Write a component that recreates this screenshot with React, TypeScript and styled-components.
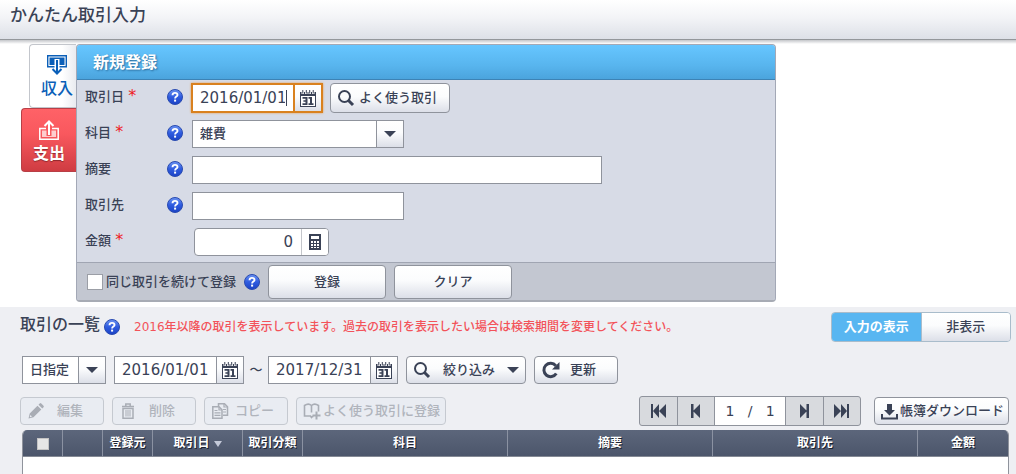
import React from "react";
import styled, { createGlobalStyle, css } from "styled-components";

const ink = "#3a4256";
const line = "#8f939c";
const face = "linear-gradient(#ffffff 0%, #fbfcfd 45%, #dcdfe8 100%)";

const GlobalStyle = createGlobalStyle`
  *, *::before, *::after { box-sizing: border-box; }
  html, body { margin: 0; padding: 0; }
  body {
    background: #eeeff3;
    color: ${ink};
    font-family: "DejaVu Sans", "Noto Sans CJK JP", sans-serif;
    font-size: 13px;
    line-height: 20px;
    font-weight: 500;
  }
  button, input, select { font: inherit; color: inherit; margin: 0; }
  svg { display: block; flex: none; }
`;

const Page = styled.div`
  display: flex;
  flex-direction: column;
  min-height: 100vh;
`;

const PageHeader = styled.header`
  height: 40px;
  padding: 3px 10px 0;
  background: linear-gradient(#ffffff, #f3f4f7 45%, #dde0e7);
  border-bottom: 1px solid #94979b;
`;

const PageTitle = styled.h1`
  margin: 0;
  font-size: 17px;
  line-height: 24px;
  font-weight: 500;
`;

const EntryArea = styled.section`
  display: flex;
  align-items: flex-start;
  padding: 4px 20px 5px 21px;
  background: linear-gradient(#c4c6ca, #ffffff 4px);
`;

const Tabs = styled.div`
  display: flex;
  flex-direction: column;
  align-items: flex-end;
  flex: none;
  width: 55px;
`;

const Tab = styled.button<{ $active?: boolean }>`
  display: flex;
  flex-direction: column;
  align-items: center;
  width: ${(p) => (p.$active ? 55 : 47)}px;
  height: 64px;
  padding: ${(p) => (p.$active ? "11px" : "10px")} 0 0;
  gap: 2px;
  border: 1px solid ${(p) => (p.$active ? "#b83f46" : "#c3c6cc")};
  border-right: 0;
  border-radius: 4px 0 0 4px;
  font-size: 16px;
  line-height: 24px;
  white-space: nowrap;
  color: ${(p) => (p.$active ? "#ffffff" : "#0b5fb8")};
  background: ${(p) =>
    p.$active
      ? "linear-gradient(#ff6267, #f9585e 40%, #cf3c42)"
      : "linear-gradient(90deg, #ffffff 70%, #e9ebf0)"};
  ${(p) =>
    p.$active &&
    css`
      font-weight: 700;
      text-shadow: 0 1px 1px #8e2a2e;
    `}
  ${(p) => !p.$active && "padding-left: 8px;"}
`;

const Panel = styled.form`
  flex: 0 1 700px;
  min-width: 0;
  border: 1px solid #a3a8b6;
  border-bottom: 2px solid #a7abb4;
  border-radius: 4px;
  background: #d7dbe6;
  overflow: hidden;
`;

const PanelTitle = styled.h2`
  margin: 0;
  height: 35px;
  padding: 6px 16px 0;
  font-size: 16px;
  line-height: 24px;
  font-weight: 700;
  color: #ffffff;
  text-shadow: 1px 1px 2px #2c6c9c;
  background: linear-gradient(#66c6ff, #58b5ee 60%, #4ba4dd);
  border-bottom: 1px solid #3d83b5;
`;

const Fields = styled.div`
  padding-bottom: 2px;
`;

const FieldRow = styled.div`
  display: flex;
  align-items: center;
  height: 36px;
  padding-left: 8px;
`;

const FieldLabel = styled.label`
  width: 82px;
  padding-bottom: 2px;
  white-space: pre;
`;

const Required = styled.span`
  color: #ee1c24;
  font-size: 16px;
  line-height: 16px;
`;

const HelpSlot = styled.span`
  display: flex;
  width: 25px;
  padding-bottom: 2px;
`;

const HelpButton = styled.button`
  display: block;
  flex: none;
  padding: 0;
  border: 0;
  background: none;
`;

const TextField = styled.input<{ $width: number }>`
  width: ${(p) => p.$width}px;
  height: 28px;
  padding: 0 8px;
  border: 1px solid ${line};
  background: #ffffff;
  outline: none;
`;

const Group = styled.div<{ $width: number; $focus?: boolean; $round?: boolean }>`
  display: flex;
  flex: none;
  width: ${(p) => p.$width}px;
  height: ${(p) => (p.$focus ? 30 : 28)}px;
  border: ${(p) => (p.$focus ? "2px solid #d9811f" : `1px solid ${line}`)};
  border-radius: ${(p) => (p.$round ? 4 : 0)}px;
  background: #ffffff;
  overflow: hidden;
  ${(p) => p.$focus && "box-shadow: 0 0 2px #e9a04f; margin: 0 7px 0 -1px;"}
  ${(p) => p.$round && "margin-left: 2px;"}
`;

const InputCell = styled.div`
  display: grid;
  flex: 1;
  min-width: 0;
  align-items: center;
  > * { grid-area: 1 / 1; }
`;

const GroupInput = styled.input<{ $right?: boolean }>`
  width: 100%;
  min-width: 0;
  height: 100%;
  padding: 0 8px 0 7px;
  border: 0;
  outline: none;
  background: none;
  font-size: 15px;
  text-align: ${(p) => (p.$right ? "right" : "left")};
`;

const Caret = styled.span`
  justify-self: end;
  width: 1px;
  height: 16px;
  margin-right: 6px;
  background: ${ink};
`;

const GroupButton = styled.button<{ $focus?: boolean; $plain?: boolean }>`
  display: flex;
  flex: none;
  align-items: center;
  justify-content: center;
  width: ${(p) => (p.$focus ? 28 : 27)}px;
  padding: 0;
  border: 0;
  border-left: ${(p) =>
    p.$focus ? "2px solid #d9811f" : `1px solid ${p.$plain ? "#c4c6cb" : line}`};
  background: ${(p) => (p.$plain ? "#ffffff" : face)};
`;

const SelectBox = styled.div<{ $width: number }>`
  display: grid;
  flex: none;
  width: ${(p) => p.$width}px;
  height: 28px;
  border: 1px solid ${line};
  background: #ffffff;
  > * { grid-area: 1 / 1; }
`;

const Select = styled.select`
  appearance: none;
  width: 100%;
  height: 26px;
  padding: 0 28px 0 7px;
  border: 0;
  outline: none;
  background: none;
`;

const SelectArrow = styled.span`
  display: flex;
  align-items: center;
  justify-content: center;
  justify-self: end;
  width: 27px;
  border-left: 1px solid ${line};
  background: ${face};
  pointer-events: none;
`;

const Button = styled.button<{ $width: number; $tall?: number; $gap?: number; $center?: boolean }>`
  display: flex;
  flex: none;
  align-items: center;
  justify-content: ${(p) => (p.$center ? "center" : "flex-start")};
  gap: ${(p) => p.$gap ?? 4}px;
  width: ${(p) => p.$width}px;
  height: ${(p) => p.$tall ?? 28}px;
  padding: 0 6px;
  border: 1px solid ${line};
  border-radius: 4px;
  background: ${face};
  white-space: nowrap;
  &:disabled {
    color: #b0b4bc;
    border-color: #c5c9d0;
    background: #e9ecf2;
  }
`;

const PanelFooter = styled.div`
  display: flex;
  align-items: center;
  gap: 8px;
  height: 38px;
  padding: 0 10px;
  background: #c3c7d1;
  border-top: 1px solid #a0a5b2;
`;

const CheckLabel = styled.label`
  display: flex;
  align-items: center;
  gap: 3px;
  white-space: nowrap;
`;

const Check = styled.input<{ $small?: boolean }>`
  appearance: none;
  display: inline-block;
  vertical-align: middle;
  width: ${(p) => (p.$small ? 12 : 16)}px;
  height: ${(p) => (p.$small ? 12 : 16)}px;
  border: 1px solid ${(p) => (p.$small ? "#c4c4c4" : "#9b9ea6")};
  background: ${(p) => (p.$small ? "#e6e6e6" : "#ffffff")};
`;

const ListArea = styled.section`
  display: flex;
  flex: 1;
  flex-direction: column;
  padding: 5px 5px 0 20px;
`;

const ListHead = styled.div`
  display: flex;
  align-items: center;
  height: 30px;
`;

const ListTitle = styled.h2`
  margin: 0 4px 4px 0;
  font-size: 16px;
  line-height: 24px;
  font-weight: 500;
  white-space: nowrap;
`;

const Notice = styled.p`
  flex: 1;
  margin: 0 0 0 14px;
  font-size: 12px;
  color: #f3535a;
  white-space: nowrap;
`;

const Toggle = styled.div`
  display: flex;
  flex: none;
  width: 180px;
  height: 30px;
  border: 1px solid #a9bccb;
  border-radius: 4px;
  overflow: hidden;
`;

const ToggleButton = styled.button<{ $active?: boolean }>`
  flex: 1;
  padding: 0;
  border: 0;
  font-weight: ${(p) => (p.$active ? 700 : 500)};
  color: ${(p) => (p.$active ? "#ffffff" : ink)};
  background: ${(p) => (p.$active ? "#58b6f1" : face)};
  border-left: ${(p) => (p.$active ? "0" : "1px solid #a9bccb")};
`;

const FilterBar = styled.div`
  display: flex;
  align-items: center;
  gap: 8px;
  margin-top: 14px;
  padding-left: 2px;
`;

const Range = styled.div`
  display: flex;
  align-items: center;
`;

const RangeMark = styled.span`
  width: 24px;
  text-align: center;
`;

const ActionBar = styled.div`
  display: flex;
  align-items: center;
  gap: 8px;
  height: 30px;
  margin: 12px 2px 4px 0;
`;

const Pager = styled.nav`
  display: flex;
  flex: none;
  width: 222px;
  height: 30px;
  margin: 0 5px 0 auto;
  border: 1px solid ${line};
  border-radius: 3px;
  background: #d8dade;
  overflow: hidden;
`;

const PagerButton = styled.button`
  display: flex;
  flex: 1;
  align-items: center;
  justify-content: center;
  padding: 0;
  border: 0;
  background: none;
  & + & { border-left: 1px solid ${line}; }
`;

const PagerText = styled.span`
  width: 72px;
  border: solid ${line};
  border-width: 0 1px;
  background: #ffffff;
  font-size: 14px;
  line-height: 28px;
  text-align: center;
  white-space: pre;
`;

const TableFrame = styled.div`
  flex: 1;
  margin: 0 2px;
  border: solid ${line};
  border-width: 0 1px;
  border-radius: 5px 5px 0 0;
  background: #ffffff;
  overflow: hidden;
`;

const Table = styled.table`
  width: 100%;
  table-layout: fixed;
  border-collapse: separate;
  border-spacing: 0;
`;

const HeadCell = styled.th<{ $width?: number }>`
  width: ${(p) => (p.$width ? `${p.$width}px` : "auto")};
  height: 27px;
  padding: 0;
  border-right: 1px solid #8b92a2;
  border-bottom: 1px solid #858a95;
  background: linear-gradient(#5c667b, #4c566b);
  color: #ffffff;
  font-size: 12px;
  line-height: 20px;
  font-weight: 700;
  text-shadow: 1px 1px 0 #1c2230;
  white-space: nowrap;
  &:last-child { border-right: 0; }
`;

const SortMark = styled.span`
  display: inline-block;
  margin-left: 4px;
  border: solid transparent;
  border-width: 6px 4px 0;
  border-top-color: #c3c9d8;
`;

const Help = () => (
  <HelpButton type="button" aria-label="ヘルプ">
    <svg width="16" height="16" viewBox="0 0 16 16">
      <defs>
        <linearGradient id="helpFill" x1="0" y1="0" x2="0" y2="1">
          <stop offset="0" stopColor="#6c94f2" />
          <stop offset="0.5" stopColor="#2f5ce0" />
          <stop offset="1" stopColor="#1a42c4" />
        </linearGradient>
      </defs>
      <circle cx="8" cy="8" r="7.5" fill="url(#helpFill)" stroke="#2a4bb0" strokeWidth="1" />
      <path d="M5.5 6.2C5.6 4.7 6.600 3.900 8 3.900C9.500 3.900 10.500 4.700 10.500 5.900C10.500 7.600 8.100 7.500 8.100 9.500" fill="none" stroke="#fff" strokeWidth="1.900" />
      <rect x="7.100" y="10.600" width="2" height="2" fill="#fff" />
    </svg>
  </HelpButton>
);

const CalendarIcon = () => (
  <svg width="16" height="17" viewBox="0 0 16 17">
    <path d="M0 2h1.500v2H4V2h1v2h2.500V2h1v2H11V2h1v2h2.500V2H16v15H0z" fill={ink} />
    <path d="M2.300 0h1v3.500h-1zM5.800 0h1v3.500h-1zM9.200 0h1v3.500h-1zM12.700 0h1v3.500h-1z" fill={ink} />
    <rect x="1" y="6" width="14" height="10" fill="#fff" />
    <path d="M2.500 7H7.500V15H2.500V13.300H5.500V11.800H3.400V10.200H5.500V8.700H2.500zM8.500 7H12V13.300H13.500V15H8.500V13.300H10V8.700H8.500z" fill={ink} />
  </svg>
);

const SearchIcon = () => (
  <svg width="18" height="18" viewBox="0 0 18 18" fill="none" stroke={ink}>
    <circle cx="7.500" cy="7.500" r="5.500" strokeWidth="2" />
    <path d="M11.500 11.500L16 16" strokeWidth="3" />
  </svg>
);

const DownIcon = () => (
  <svg width="12" height="6" viewBox="0 0 12 6">
    <path d="M0 0h12L6 6z" fill={ink} />
  </svg>
);

const CalculatorIcon = () => (
  <svg width="12" height="16" viewBox="0 0 12 16">
    <path d="M0 0h12v16H0z" fill={ink} />
    <path
      d="M2 2h8v3H2zM2 7h2v2H2zM5 7h2v2H5zM8 7h2v2H8zM2 10h2v2H2zM5 10h2v2H5zM8 10h2v2H8zM2 13h2v1H2zM5 13h2v1H5zM8 13h2v1H8z"
      fill="#fff"
    />
  </svg>
);

const RefreshIcon = () => (
  <svg width="19" height="18" viewBox="0 0 19 18">
    <path d="M14.800 4.700A6.700 6.700 0 1 0 15.300 12.500" fill="none" stroke={ink} strokeWidth="3" />
    <path d="M18.500 1v7.500h-7.500z" fill={ink} />
  </svg>
);

const IncomeIcon = () => (
  <svg width="20" height="20" viewBox="0 0 20 20" fill="none" stroke="#0b5fb8">
    <path d="M.7.700h18.600v11H.7z" strokeWidth="1.400" />
    <path d="M2.500 2.500h15v7.500h-15z" fill="#0b5fb8" stroke="none" />
    <path d="M10 4v10" stroke="#fff" strokeWidth="5" />
    <path d="M10 5v13M5.500 14l4.500 4.500 4.500-4.500" strokeWidth="2" />
  </svg>
);

const ExpenseIcon = () => (
  <svg width="20" height="20" viewBox="0 0 20 20" fill="none" stroke="#fff">
    <path d="M7 8.500H.8v10.700h18.400V8.500H13" strokeWidth="1.500" />
    <path d="M3 10.500h4.500v5.500h5v-5.500H17v6.500H3z" fill="#fff" opacity="0.700" stroke="none" />
    <path d="M10 15V2M5.500 6L10 1.500 14.500 6" strokeWidth="2" />
  </svg>
);

const PencilIcon = () => (
  <svg width="18" height="18" viewBox="0 0 18 18" fill="#a9adb5">
    <path d="M1.500 16.500l1.200-5L10.500 3.700l3.800 3.800-7.800 7.800zM11.500 2.700l1.200-1.200q.8-.8 1.600 0l2.200 2.200q.8.800 0 1.600l-1.200 1.200z" />
    <path d="M3.400 13l1.600 1.600-1.800.6-.4-.4z" fill="#e9ecf2" />
  </svg>
);

const TrashIcon = () => (
  <svg width="18" height="18" viewBox="0 0 18 18" fill="none" stroke="#a9adb5">
    <path d="M3 4.500h12M6.800 4V2h4.400v2M4 6.500V16.200h10V6.500z" strokeWidth="1.500" />
    <path d="M7 8v6.500M9 8v6.500M11 8v6.500" strokeWidth="1" />
  </svg>
);

const CopyIcon = () => (
  <svg width="18" height="18" viewBox="0 0 18 18" fill="none" stroke="#a9adb5">
    <path d="M7.500 4.500V1.800h6l3 3v8.400H12" strokeWidth="1.500" />
    <path d="M1.800 4.800h6.200l3 3v8.400H1.800z" strokeWidth="1.500" />
    <path d="M8 5v3h3M13 2v3h3M3.500 8.500h3M3.500 10.900h6M3.500 13.300h6M12 7.500h3M12 10h3" strokeWidth="1.200" />
  </svg>
);

const BookIcon = () => (
  <svg width="18" height="18" viewBox="0 0 18 18" fill="none" stroke="#a9adb5">
    <path d="M10.500 14.500H9.500L8.500 15.500 7.500 14H1.500V3.500Q5.500.800 8.500 3.500 11.500.800 15.500 3.500V9.500M8.500 3.500V10.500" strokeWidth="1.600" />
    <path d="M13.500 9.500v8M9.500 13.500h8" strokeWidth="2" />
  </svg>
);

const DownloadIcon = () => (
  <svg width="17" height="17" viewBox="0 0 17 17" fill={ink}>
    <path d="M6 1h5v6h3L8.500 12.500 3 7h3zM0 11h2v3.500h13V11h2v5.500H0z" />
  </svg>
);

const PagerIcon = ({ kind }: { kind: "first" | "prev" | "next" | "last" }) => {
  const paths = {
    first: "M1 0h2v14H1zM9 0v14L3 7zM16 0v14L9 7z",
    prev: "M4 0h2.500v14H4zM13 0v14L6 7z",
    next: "M13 0h-2.500v14H13zM4 0v14l7-7z",
    last: "M16 0h-2v14h2zM8 0v14l6-7zM1 0v14l7-7z",
  };
  return (
    <svg width="17" height="14" viewBox="0 0 17 14">
      <path d={paths[kind]} fill={ink} />
    </svg>
  );
};

const DateField = ({ label, value }: { label: string; value: string }) => (
  <Group $width={130}>
    <GroupInput aria-label={label} defaultValue={value} />
    <GroupButton type="button" aria-label="カレンダー">
      <CalendarIcon />
    </GroupButton>
  </Group>
);

const columns: { name: string; width?: number; sorted?: boolean }[] = [
  { name: "登録元", width: 50 },
  { name: "取引日", width: 90, sorted: true },
  { name: "取引分類", width: 60 },
  { name: "科目" },
  { name: "摘要" },
  { name: "取引先" },
  { name: "金額", width: 90 },
];

export default function App() {
  return (
    <>
      <GlobalStyle />
      <Page>
        <PageHeader>
          <PageTitle>かんたん取引入力</PageTitle>
        </PageHeader>

        <EntryArea>
          <Tabs>
            <Tab type="button">
              <IncomeIcon />
              収入
            </Tab>
            <Tab type="button" $active>
              <ExpenseIcon />
              支出
            </Tab>
          </Tabs>
          <Panel onSubmit={(e) => e.preventDefault()}>
            <PanelTitle>新規登録</PanelTitle>
            <Fields>
              <FieldRow>
                <FieldLabel htmlFor="date">
                  取引日 <Required>*</Required>
                </FieldLabel>
                <HelpSlot><Help /></HelpSlot>
                <Group $width={132} $focus>
                  <InputCell>
                    <GroupInput id="date" defaultValue="2016/01/01" />
                    <Caret />
                  </InputCell>
                  <GroupButton type="button" $focus aria-label="カレンダー">
                    <CalendarIcon />
                  </GroupButton>
                </Group>
                <Button type="button" $width={120} $tall={30}>
                  <SearchIcon />
                  よく使う取引
                </Button>
              </FieldRow>
              <FieldRow>
                <FieldLabel htmlFor="account">
                  科目 <Required>*</Required>
                </FieldLabel>
                <HelpSlot><Help /></HelpSlot>
                <SelectBox $width={212}>
                  <Select id="account" defaultValue="雑費">
                    <option>雑費</option>
                  </Select>
                  <SelectArrow><DownIcon /></SelectArrow>
                </SelectBox>
              </FieldRow>
              <FieldRow>
                <FieldLabel htmlFor="summary">摘要</FieldLabel>
                <HelpSlot><Help /></HelpSlot>
                <TextField id="summary" $width={410} />
              </FieldRow>
              <FieldRow>
                <FieldLabel htmlFor="partner">取引先</FieldLabel>
                <HelpSlot><Help /></HelpSlot>
                <TextField id="partner" $width={212} />
              </FieldRow>
              <FieldRow>
                <FieldLabel htmlFor="amount">
                  金額 <Required>*</Required>
                </FieldLabel>
                <HelpSlot />
                <Group $width={135} $round>
                  <GroupInput id="amount" defaultValue="0" $right />
                  <GroupButton type="button" $plain aria-label="電卓">
                    <CalculatorIcon />
                  </GroupButton>
                </Group>
              </FieldRow>
            </Fields>
            <PanelFooter>
              <CheckLabel>
                <Check type="checkbox" />
                同じ取引を続けて登録
              </CheckLabel>
              <Help />
              <Button type="submit" $width={118} $tall={34} $center>登録</Button>
              <Button type="reset" $width={118} $tall={34} $center>クリア</Button>
            </PanelFooter>
          </Panel>
        </EntryArea>

        <ListArea>
          <ListHead>
            <ListTitle>取引の一覧</ListTitle>
            <Help />
            <Notice>
              2016年以降の取引を表示しています。過去の取引を表示したい場合は検索期間を変更してください。
            </Notice>
            <Toggle>
              <ToggleButton type="button" $active>入力の表示</ToggleButton>
              <ToggleButton type="button">非表示</ToggleButton>
            </Toggle>
          </ListHead>

          <FilterBar>
            <SelectBox $width={84}>
              <Select aria-label="期間の種類" defaultValue="日指定">
                <option>日指定</option>
              </Select>
              <SelectArrow><DownIcon /></SelectArrow>
            </SelectBox>
            <Range>
              <DateField label="開始日" value="2016/01/01" />
              <RangeMark>～</RangeMark>
              <DateField label="終了日" value="2017/12/31" />
            </Range>
            <Button type="button" $width={120} $gap={12}>
              <SearchIcon />
              絞り込み
              <DownIcon />
            </Button>
            <Button type="button" $width={84} $gap={10}>
              <RefreshIcon />
              更新
            </Button>
          </FilterBar>

          <ActionBar>
            <Button type="button" $width={84} $gap={12} disabled><PencilIcon />編集</Button>
            <Button type="button" $width={84} $gap={12} disabled><TrashIcon />削除</Button>
            <Button type="button" $width={84} $gap={6} disabled><CopyIcon />コピー</Button>
            <Button type="button" $width={150} $gap={2} disabled><BookIcon />よく使う取引に登録</Button>
            <Pager aria-label="ページ">
              <PagerButton type="button" aria-label="最初"><PagerIcon kind="first" /></PagerButton>
              <PagerButton type="button" aria-label="前"><PagerIcon kind="prev" /></PagerButton>
              <PagerText>{"1   /   1"}</PagerText>
              <PagerButton type="button" aria-label="次"><PagerIcon kind="next" /></PagerButton>
              <PagerButton type="button" aria-label="最後"><PagerIcon kind="last" /></PagerButton>
            </Pager>
            <Button type="button" $width={135} $gap={2}><DownloadIcon />帳簿ダウンロード</Button>
          </ActionBar>

          <TableFrame>
            <Table>
              <thead>
                <tr>
                  <HeadCell $width={40}>
                    <Check type="checkbox" $small aria-label="すべて選択" />
                  </HeadCell>
                  <HeadCell $width={40} />
                  {columns.map((c) => (
                    <HeadCell key={c.name} $width={c.width}>
                      {c.name}
                      {c.sorted && <SortMark />}
                    </HeadCell>
                  ))}
                </tr>
              </thead>
            </Table>
          </TableFrame>
        </ListArea>
      </Page>
    </>
  );
}
